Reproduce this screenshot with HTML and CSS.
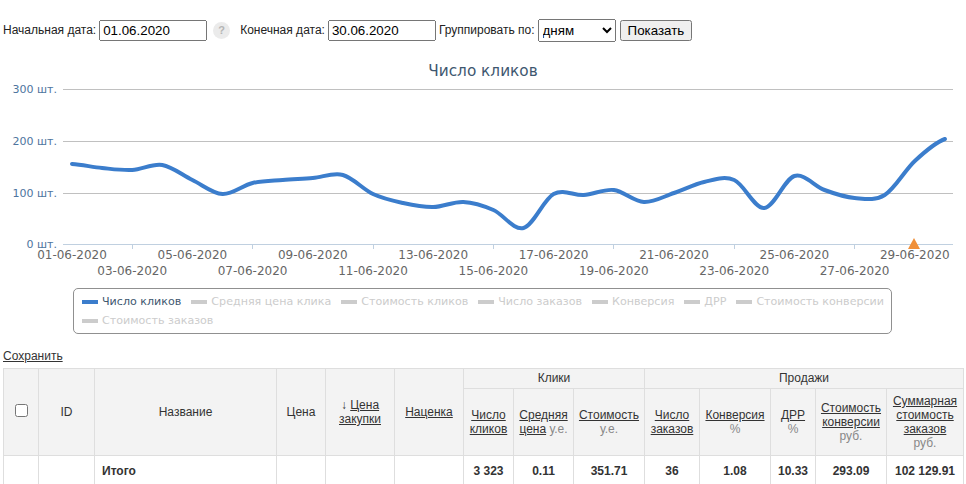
FILE: index.html
```html
<!DOCTYPE html>
<html>
<head>
  <meta charset="utf-8">
  <title>Статистика кликов</title>
  <link rel="stylesheet" href="styles.css">
</head>
<body>

  <div class="filter">
    <label>Начальная дата: <input type="text" value="01.06.2020"></label>
    <span class="help">?</span>
    <label class="end-date">Конечная дата: <input type="text" value="30.06.2020"></label>
    <label class="group-by">Группировать по:
      <select>
        <option>дням</option>
        <option>неделям</option>
        <option>месяцам</option>
      </select>
    </label>
    <button class="show-button">Показать</button>
  </div>

  <svg class="chart" width="960" height="230" viewBox="3 55 960 230">
    <text class="chart-title" x="483" y="76">Число кликов</text>

    <!-- сетка -->
    <line class="grid" x1="63" y1="89.5" x2="953" y2="89.5"/>
    <line class="grid" x1="63" y1="141.5" x2="953" y2="141.5"/>
    <line class="grid" x1="63" y1="193.5" x2="953" y2="193.5"/>
    <line class="axis" x1="63" y1="244.5" x2="953" y2="244.5"/>

    <text class="y-label" x="57" y="93">300 шт.</text>
    <text class="y-label" x="57" y="145">200 шт.</text>
    <text class="y-label" x="57" y="197">100 шт.</text>
    <text class="y-label" x="57" y="248">0 шт.</text>

    <line class="tick" x1="132.5" y1="244" x2="132.5" y2="249"/>
    <line class="tick" x1="252.5" y1="244" x2="252.5" y2="249"/>
    <line class="tick" x1="373.5" y1="244" x2="373.5" y2="249"/>
    <line class="tick" x1="493.5" y1="244" x2="493.5" y2="249"/>
    <line class="tick" x1="613.5" y1="244" x2="613.5" y2="249"/>
    <line class="tick" x1="734.5" y1="244" x2="734.5" y2="249"/>
    <line class="tick" x1="854.5" y1="244" x2="854.5" y2="249"/>

    <text class="x-label" x="72" y="259">01-06-2020</text>
    <text class="x-label" x="192.4" y="259">05-06-2020</text>
    <text class="x-label" x="312.8" y="259">09-06-2020</text>
    <text class="x-label" x="433.2" y="259">13-06-2020</text>
    <text class="x-label" x="553.6" y="259">17-06-2020</text>
    <text class="x-label" x="674" y="259">21-06-2020</text>
    <text class="x-label" x="794.4" y="259">25-06-2020</text>
    <text class="x-label" x="914.8" y="259">29-06-2020</text>

    <text class="x-label" x="132.2" y="275">03-06-2020</text>
    <text class="x-label" x="252.6" y="275">07-06-2020</text>
    <text class="x-label" x="373" y="275">11-06-2020</text>
    <text class="x-label" x="493.4" y="275">15-06-2020</text>
    <text class="x-label" x="613.8" y="275">19-06-2020</text>
    <text class="x-label" x="734.2" y="275">23-06-2020</text>
    <text class="x-label" x="854.6" y="275">27-06-2020</text>

    <!-- число кликов по дням -->
    <path class="series" d="M72 164
      C82 164.7 92.1 167 102.1 168
      C112.1 169 122.2 170.5 132.2 170
      C142.2 169.5 152.3 163.3 162.3 165
      C172.3 166.7 182.4 175.2 192.4 180
      C202.4 184.8 212.5 193.5 222.5 194
      C232.5 194.5 242.6 185.3 252.6 183
      C262.6 180.7 272.7 180.8 282.7 180
      C292.7 179.2 302.8 178.8 312.8 178
      C322.8 177.2 332.9 172.3 342.9 175
      C352.9 177.7 363 189.3 373 194
      C383 198.7 393.1 200.8 403.1 203
      C413.1 205.2 423.2 207.2 433.2 207
      C443.2 206.8 453.3 201.5 463.3 202
      C473.3 202.5 483.4 205.7 493.4 210
      C503.4 214.3 513.5 230.7 523.5 228
      C533.5 225.3 543.6 199.5 553.6 194
      C563.6 188.5 573.7 195.7 583.7 195
      C593.7 194.3 603.8 188.8 613.8 190
      C623.8 191.2 633.9 201.5 643.9 202
      C653.9 202.5 664 196.3 674 193
      C684 189.7 694.1 184.2 704.1 182
      C714.1 179.8 724.2 175.7 734.2 180
      C744.2 184.3 754.3 208.7 764.3 208
      C774.3 207.3 784.4 179 794.4 176
      C804.4 173 814.5 186.3 824.5 190
      C834.5 193.7 844.6 197.2 854.6 198
      C864.6 198.8 874.7 201.2 884.7 195
      C894.7 188.8 904.8 170.3 914.8 161
      C924.8 151.7 934.9 142.7 944.9 139"/>

    <polygon class="flag" points="908,249 920,249 914,238"/>
  </svg>

  <div class="legend">
    <span class="legend-item active"><i></i>Число кликов</span>
    <span class="legend-item"><i></i>Средняя цена клика</span>
    <span class="legend-item"><i></i>Стоимость кликов</span>
    <span class="legend-item"><i></i>Число заказов</span>
    <span class="legend-item"><i></i>Конверсия</span>
    <span class="legend-item"><i></i>ДРР</span>
    <span class="legend-item"><i></i>Стоимость конверсии</span>
    <span class="legend-item"><i></i>Стоимость заказов</span>
  </div>

  <div class="save-box">
    <a href="#" class="save-link">Сохранить</a>
  </div>

  <table class="report">
    <colgroup>
      <col style="width:35px">
      <col style="width:56px">
      <col style="width:182px">
      <col style="width:49px">
      <col style="width:69px">
      <col style="width:69px">
      <col style="width:50px">
      <col style="width:60px">
      <col style="width:71px">
      <col style="width:55px">
      <col style="width:71px">
      <col style="width:45px">
      <col style="width:71px">
      <col style="width:77px">
    </colgroup>
    <thead>
      <tr>
        <th rowspan="2"><input type="checkbox"></th>
        <th rowspan="2">ID</th>
        <th rowspan="2">Название</th>
        <th rowspan="2">Цена</th>
        <th rowspan="2">↓ <a href="#">Цена</a><br><a href="#">закупки</a></th>
        <th rowspan="2"><a href="#">Наценка</a></th>
        <th colspan="3" class="group">Клики</th>
        <th colspan="5" class="group">Продажи</th>
      </tr>
      <tr>
        <th><a href="#">Число<br>кликов</a></th>
        <th><a href="#">Средняя</a><br><a href="#">цена</a> <span class="unit">у.е.</span></th>
        <th><a href="#">Стоимость</a><br><span class="unit">у.е.</span></th>
        <th><a href="#">Число<br>заказов</a></th>
        <th><a href="#">Конверсия</a><br><span class="unit">%</span></th>
        <th><a href="#">ДРР</a><br><span class="unit">%</span></th>
        <th><a href="#">Стоимость<br>конверсии</a><br><span class="unit">руб.</span></th>
        <th><a href="#">Суммарная<br>стоимость<br>заказов</a><br><span class="unit">руб.</span></th>
      </tr>
    </thead>
    <tbody>
      <tr class="total">
        <td></td>
        <td></td>
        <td class="name">Итого</td>
        <td></td>
        <td></td>
        <td></td>
        <td>3 323</td>
        <td>0.11</td>
        <td>351.71</td>
        <td>36</td>
        <td>1.08</td>
        <td>10.33</td>
        <td>293.09</td>
        <td>102 129.91</td>
      </tr>
    </tbody>
  </table>

</body>
</html>
```

FILE: styles.css
```css
body
{
  margin:0;
  padding:0 3px;
  font-family:"Liberation Sans", Arial, sans-serif;
  font-size:12px;
  color:#222;
  background-color:#fff;
}

/* фильтр */

.filter
{
  display:flex;
  align-items:center;
  height:24px;
  margin-top:18px;
}

.filter label
{
  display:flex;
  align-items:center;
  white-space:nowrap;
}

.filter input[type=text]
{
  width:108px;
  height:21px;
  box-sizing:border-box;
  margin:0 0 0 3px;
  font-family:"Liberation Sans", Arial, sans-serif;
  font-size:13.33px;
}

.help
{
  width:17px;
  height:17px;
  margin-left:6px;
  border-radius:50%;
  background-color:#ebebeb;
  color:#b5b5b5;
  font-size:11px;
  font-weight:bold;
  line-height:17px;
  text-align:center;
}

.end-date
{
  margin-left:10px;
}

.group-by
{
  margin-left:3px;
}

.group-by select
{
  width:78px;
  height:23px;
  margin:0 0 0 3px;
  font-family:"Liberation Sans", Arial, sans-serif;
  font-size:13.33px;
}

.show-button
{
  margin-left:4px;
  font-family:"Liberation Sans", Arial, sans-serif;
  font-size:13.33px;
}

/* график */

.chart
{
  display:block;
  margin-top:13px;
  font-family:"DejaVu Sans", Verdana, sans-serif;
}

.chart-title
{
  font-size:15.3px;
  fill:#3e576f;
  text-anchor:middle;
}

.grid
{
  stroke:#c0c0c0;
  stroke-width:1;
}

.axis, .tick
{
  stroke:#c0d0e0;
  stroke-width:1;
}

.y-label
{
  font-size:11px;
  fill:#4d759e;
  text-anchor:end;
}

.x-label
{
  font-size:12px;
  fill:#666;
  text-anchor:middle;
}

.series
{
  fill:none;
  stroke:#3b7dcc;
  stroke-width:4;
  stroke-linecap:round;
  stroke-linejoin:round;
}

.flag
{
  fill:#f0903a;
}

.legend
{
  width:819px;
  box-sizing:border-box;
  margin:3px 0 0 70px;
  padding:3px 0 3px 8px;
  border:1px solid #909090;
  border-radius:5px;

  display:flex;
  flex-wrap:wrap;
  column-gap:10px;

  font-family:"DejaVu Sans", Verdana, sans-serif;
  font-size:11.1px;
  line-height:19px;
}

.legend-item
{
  display:flex;
  align-items:center;
  white-space:nowrap;
  color:#ccc;
}

.legend-item i
{
  width:16px;
  height:4px;
  margin-right:4px;
  background-color:#ccc;
}

.legend-item.active
{
  color:#3e576f;
}

.legend-item.active i
{
  background-color:#3b7dcc;
}

/* таблица */

.save-box
{
  margin-top:15px;
  line-height:14px;
}

.save-link, .report a
{
  color:#333;
}

.report
{
  width:960px;
  margin-top:5px;
  border-collapse:collapse;
  table-layout:fixed;
  color:#333;
}

.report th, .report td
{
  border:1px solid #dedede;
  line-height:14px;
  text-align:center;
  vertical-align:middle;
}

.report th
{
  padding:5px 3px;
  font-weight:normal;
  background-color:#f3f3f3;
}

.report th.group
{
  padding:2px 3px 3px;
}

.report th input
{
  margin:0;
}

.unit
{
  color:#888;
}

.report td
{
  padding:8px 3px 9px;
  font-weight:bold;
  background-color:#fff;
}

.report td.name
{
  text-align:left;
  padding-left:7px;
}
```
